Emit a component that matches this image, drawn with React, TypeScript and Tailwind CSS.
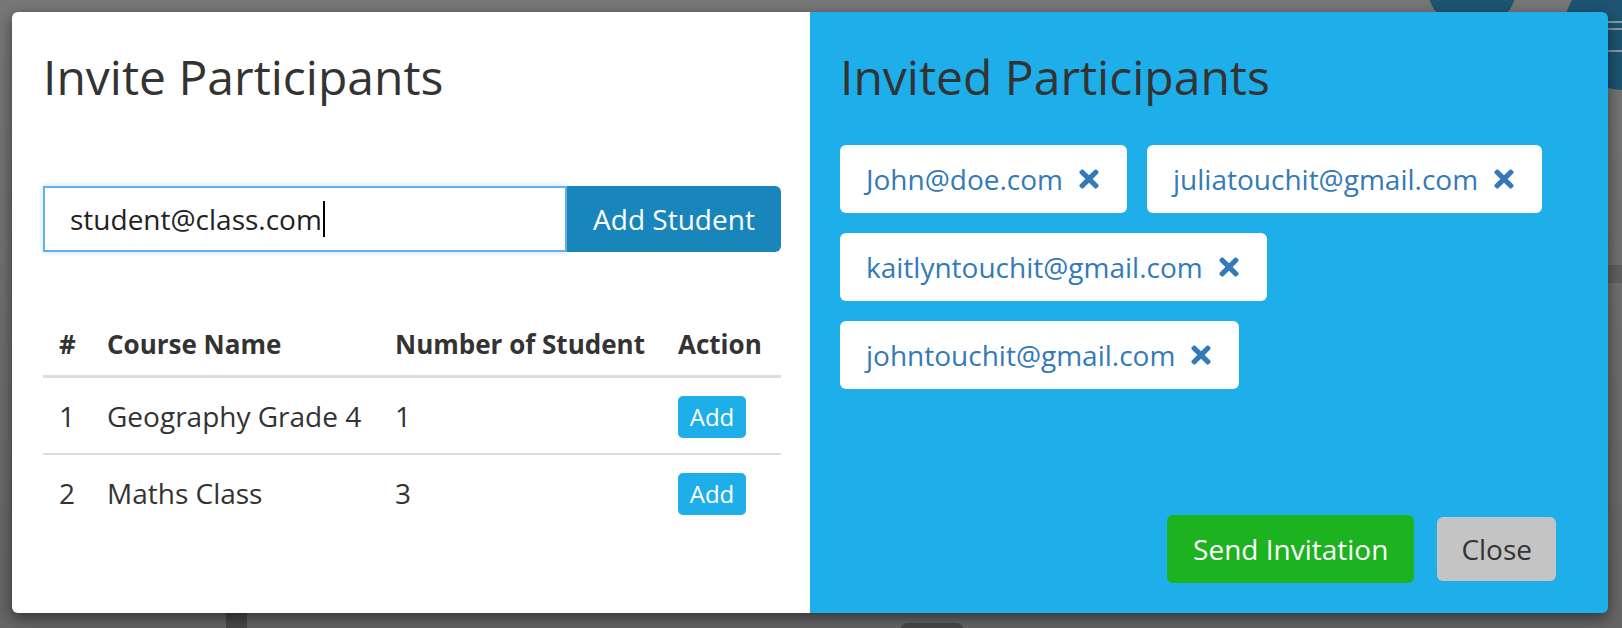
import { FaTimes } from "react-icons/fa";

const COURSES = [
  { id: 1, name: "Geography Grade 4", count: 1 },
  { id: 2, name: "Maths Class", count: 3 },
];

const INVITED = ["John@doe.com", "juliatouchit@gmail.com", "kaitlyntouchit@gmail.com", "johntouchit@gmail.com"];

export default function App() {
  return (
    <div className="relative w-full h-[628px] overflow-hidden bg-[#777777] font-['Open_Sans','Liberation_Sans',sans-serif]">
      {/* page behind the backdrop */}
      <div className="absolute left-[1427px] -top-[60px] w-[90px] h-[90px] rounded-full bg-[#1d5572]" />
      <div className="absolute left-[1564px] -top-[30px] w-[120px] h-[120px] rounded-full bg-[#1d5572]" />
      <div className="absolute left-[1608px] top-[21px] w-[14px] h-[2px] bg-[#8a9aa3]" />
      <div className="absolute left-[1608px] top-[28px] w-[14px] h-[2px] bg-[#8a9aa3]" />
      <div className="absolute left-[1608px] top-[50px] w-[14px] h-[2px] bg-[#8a9aa3]" />
      <div className="absolute left-[1608px] top-[265px] w-[14px] h-[18px] bg-[#666]" />
      <div className="absolute left-[226px] top-[613px] w-[21px] h-[20px] bg-[#555]" />
      <div className="absolute left-[900px] top-[623px] w-[64px] h-[20px] rounded-t-lg bg-[#555]" />

      <div className="absolute inset-0 bg-gradient-to-b from-transparent to-black/15" />

      <div className="relative ml-3 mt-3 w-[1596px] h-[601px] flex rounded-[6px] overflow-hidden shadow-[0_5px_15px_rgba(0,0,0,0.5)] text-[#333]">
        <div className="w-1/2 bg-white pt-[39px] pl-[31px] pr-[29px]">
          <h2 className="text-[48px] leading-[1.1] font-normal">Invite Participants</h2>

          <div className="mt-[82px] flex h-[66px]">
            <div className="flex-1 flex items-center border-2 border-[#66afe9] px-[25px] text-[28px] text-[#222] shadow-[0_0_6px_rgba(102,175,233,0.4)]">
              <span>student@class.com</span>
              <span className="ml-[1px] w-[2px] h-[36px] bg-black" />
            </div>
            <button className="w-[214px] bg-[#1886ba] text-white text-[28px] rounded-r-[6px]">Add Student</button>
          </div>

          <table className="mt-[61px] w-full border-collapse text-[28px] text-left">
            <thead>
              <tr className="h-[64px] border-b-[3px] border-[#dddddd] text-[26px]">
                <th className="w-[48px] pl-4 font-bold">#</th>
                <th className="w-[288px] pl-4 font-bold">Course Name</th>
                <th className="w-[283px] pl-4 font-bold">Number of Student</th>
                <th className="pl-4 font-bold">Action</th>
              </tr>
            </thead>
            <tbody>
              {COURSES.map((c, i) => (
                <tr key={c.id} className={`h-[77px] ${i === 0 ? "border-b-2 border-[#dddddd]" : ""}`}>
                  <td className="pl-4">{c.id}</td>
                  <td className="pl-4">{c.name}</td>
                  <td className="pl-4">{c.count}</td>
                  <td className="pl-4">
                    <button className="w-[68px] h-[42px] rounded-[5px] bg-[#1eaee9] text-white text-[24px]">Add</button>
                  </td>
                </tr>
              ))}
            </tbody>
          </table>
        </div>

        <div className="w-1/2 bg-[#1eaee9] pt-[39px] pl-[30px] pr-[52px] pb-[30px] flex flex-col">
          <h2 className="text-[48px] leading-[1.1] font-normal">Invited Participants</h2>

          <div className="mt-[41px] flex flex-wrap gap-5">
            {INVITED.map((email) => (
              <div key={email} className="h-[68px] bg-white rounded-[6px] pl-[26px] pr-[24px] flex items-center gap-[12px] text-[28px] text-[#337ab7]">
                <span>{email}</span>
                <FaTimes size={28} />
              </div>
            ))}
          </div>

          <div className="mt-auto flex justify-end items-center gap-[23px]">
            <button className="h-[68px] px-[26px] rounded-[6px] bg-[#1db21f] text-white text-[28px]">Send Invitation</button>
            <button className="h-[64px] px-[24px] rounded-[6px] bg-[#c4c4c4] text-[#333] text-[28px]">Close</button>
          </div>
        </div>
      </div>
    </div>
  );
}
